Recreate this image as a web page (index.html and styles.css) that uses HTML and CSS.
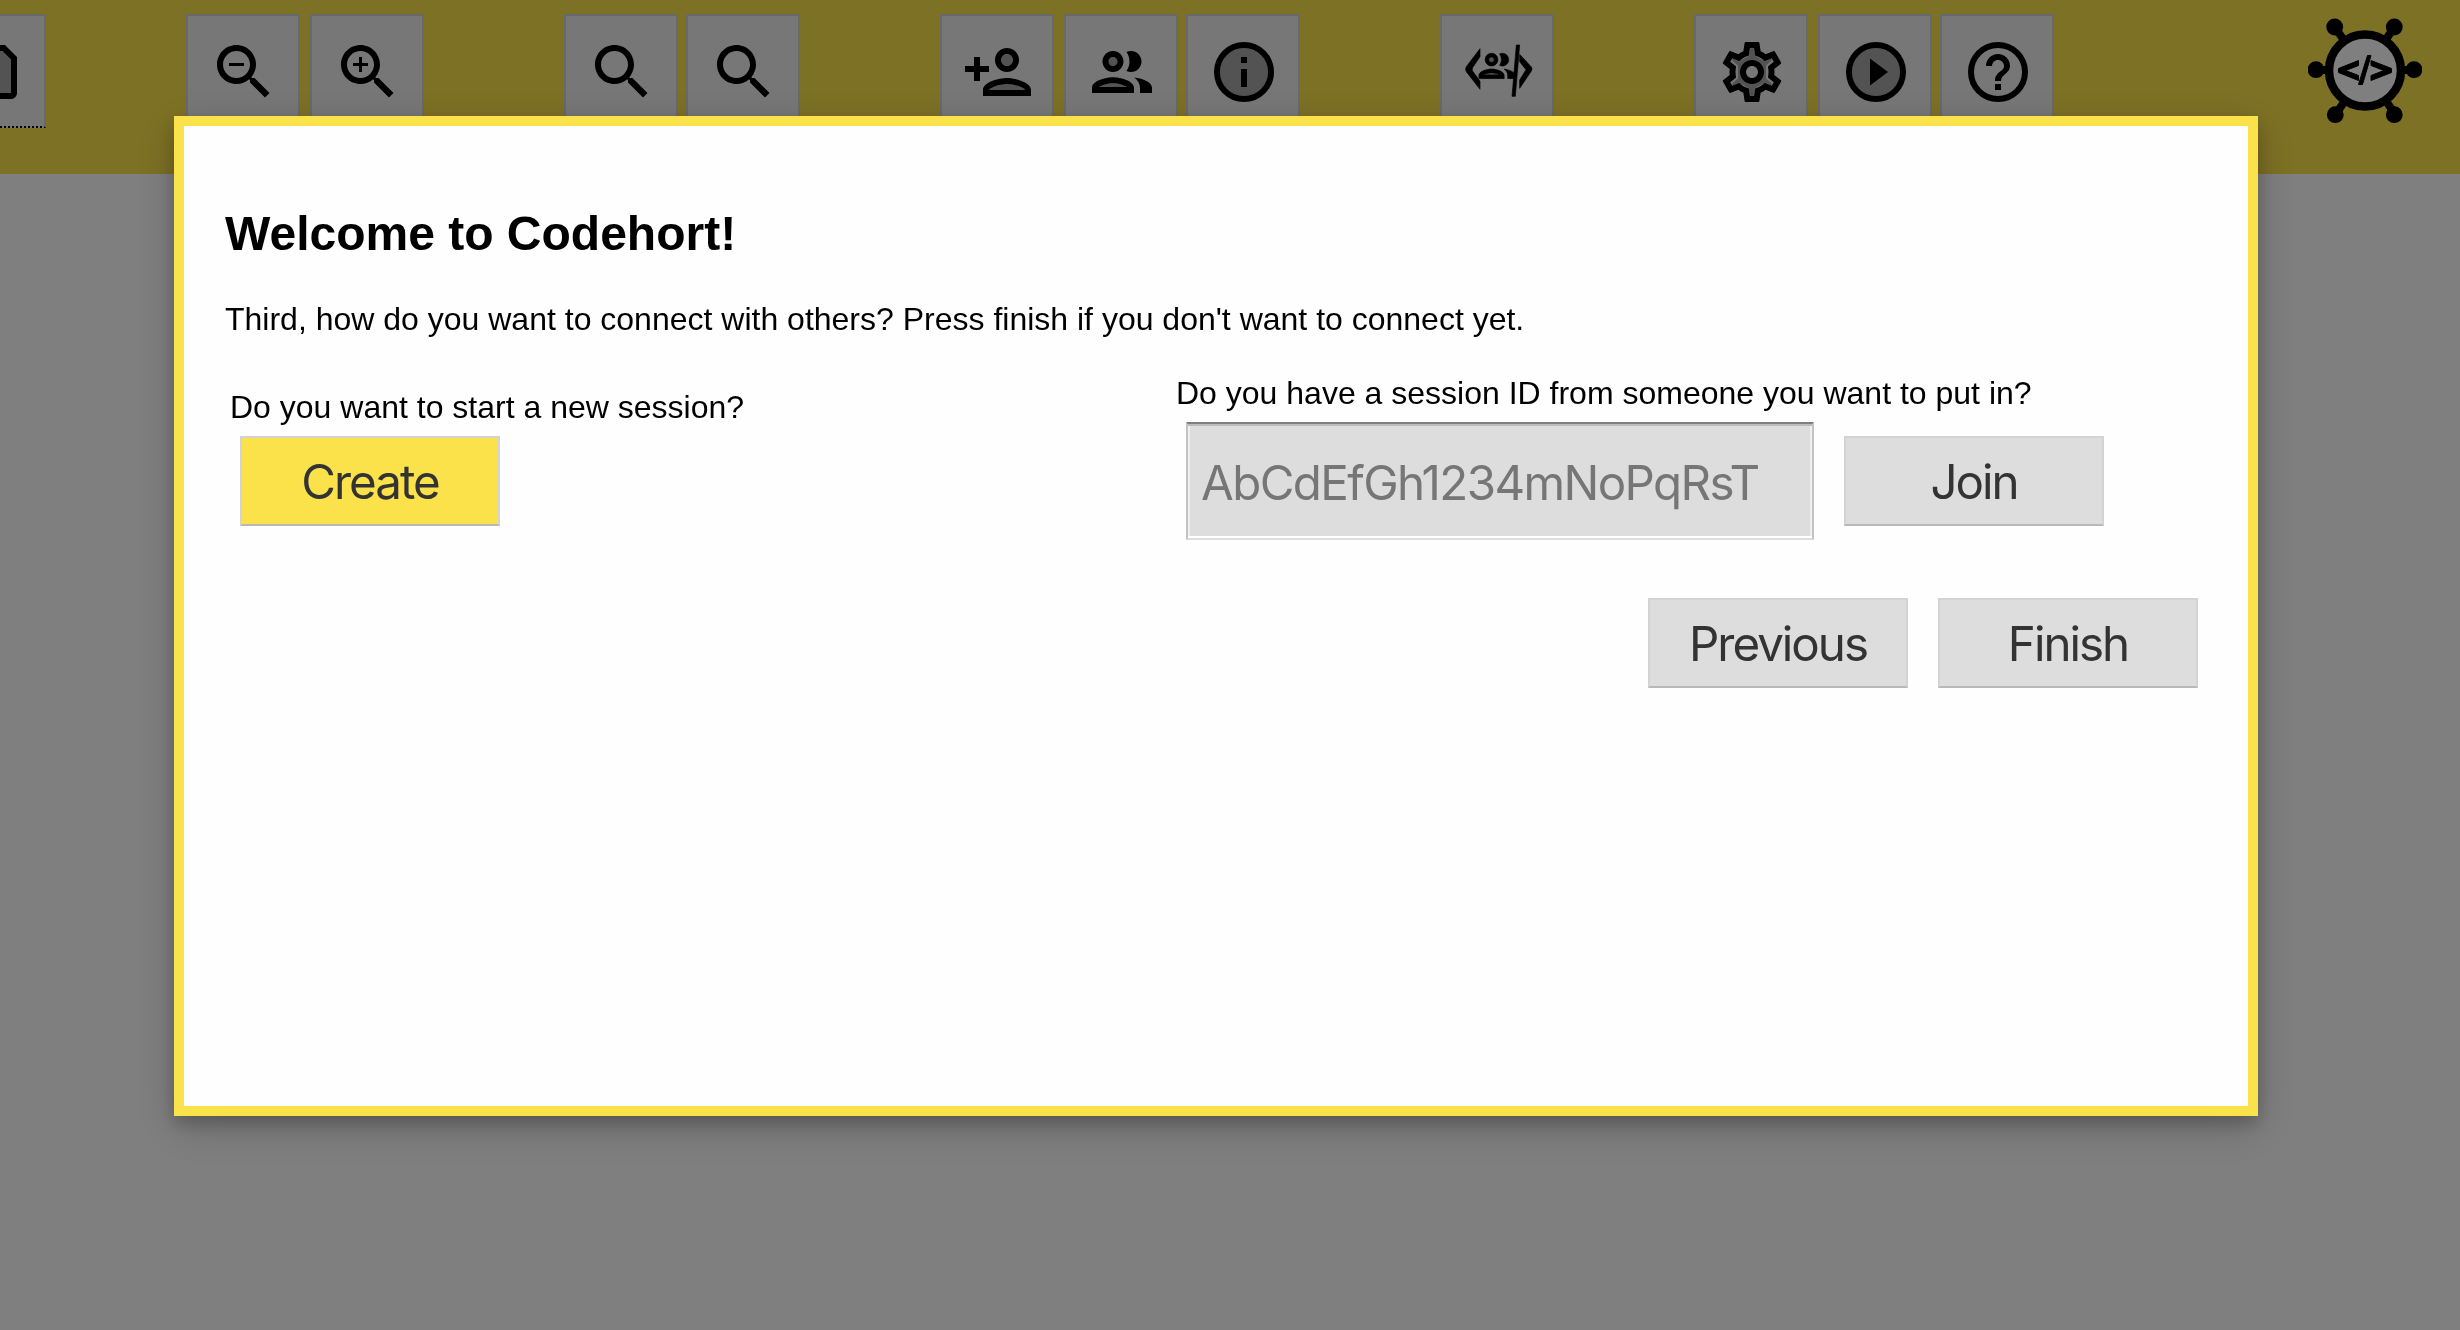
FILE: index.html
```html
<!DOCTYPE html>
<html lang="en">
<head>
<meta charset="utf-8">
<title>Codehort</title>
<link rel="stylesheet" href="styles.css">
</head>
<body>
<svg class="symbols" aria-hidden="true">
  <symbol id="search" viewBox="0 0 24 24"><path d="M15.5 14h-.79l-.28-.27C15.41 12.59 16 11.11 16 9.5 16 5.91 13.09 3 9.5 3S3 5.91 3 9.5 5.91 16 9.5 16c1.61 0 3.09-.59 4.23-1.57l.27.28v.79l5 4.99L20.49 19l-4.99-5zm-6 0C7.01 14 5 11.99 5 9.5S7.01 5 9.5 5 14 7.01 14 9.5 11.99 14 9.5 14z"/></symbol>
  <symbol id="people" viewBox="0 0 24 24">
    <path opacity=".3" d="M4.34 17h9.32c-.84-.58-2.87-1.25-4.66-1.25S5.18 16.42 4.34 17z"/><circle opacity=".3" cx="9" cy="8.5" r="1.5"/>
    <path d="M9 13.75c-2.34 0-7 1.17-7 3.5V19h14v-1.75c0-2.33-4.66-3.5-7-3.5zM4.34 17c.84-.58 2.87-1.25 4.66-1.25s3.82.67 4.66 1.25H4.34zM9 12c1.93 0 3.5-1.57 3.5-3.5S10.93 5 9 5 5.5 6.57 5.5 8.5 7.07 12 9 12zm0-5c.83 0 1.5.67 1.5 1.5S9.83 10 9 10s-1.5-.67-1.5-1.5S8.17 7 9 7zm7.04 6.81c1.16.84 1.96 1.96 1.96 3.44V19h4v-1.75c0-2.02-3.5-3.17-5.96-3.44zM15 12c1.93 0 3.5-1.57 3.5-3.5S16.93 5 15 5c-.54 0-1.04.13-1.5.35.63.89 1 1.98 1 3.15s-.37 2.26-1 3.15c.46.22.96.35 1.5.35z"/>
  </symbol>
</svg>

<header class="toolbar">
  <div class="group group-file">
    <button class="tool tool-focused" aria-label="Save"><svg class="icon" viewBox="0 0 24 24"><path opacity=".3" d="M5 5v14h14V7.83L16.17 5H5z"/><path d="M17 3H5c-1.11 0-2 .9-2 2v14c0 1.1.89 2 2 2h14c1.1 0 2-.9 2-2V7l-4-4zm2 16H5V5h11.17L19 7.83V19zM6 6h9v4H6z"/><circle cx="12" cy="15" r="3"/></svg></button>
  </div>
  <div class="group group-zoom">
    <button class="tool" aria-label="Zoom out"><svg class="icon" viewBox="0 0 24 24"><use href="#search"/><path d="M7 9h5v1H7z"/></svg></button>
    <button class="tool" aria-label="Zoom in"><svg class="icon" viewBox="0 0 24 24"><use href="#search"/><path d="M10 7H9v2H7v1h2v2h1v-2h2V9h-2z"/></svg></button>
  </div>
  <div class="group group-search">
    <button class="tool" aria-label="Search"><svg class="icon" viewBox="0 0 24 24"><use href="#search"/></svg></button>
    <button class="tool" aria-label="Search next"><svg class="icon" viewBox="0 0 24 24"><use href="#search"/></svg></button>
  </div>
  <div class="group group-people">
    <button class="tool" aria-label="Add person"><svg class="icon" viewBox="0 0 24 24"><g opacity=".3"><circle cx="15" cy="8" r="2"/><path d="M9 18h12c-.2-.71-3.3-2-6-2-2.69 0-5.78 1.28-6 2z"/></g><path d="M15 12c2.21 0 4-1.79 4-4s-1.79-4-4-4-4 1.79-4 4 1.79 4 4 4zm0-6c1.1 0 2 .9 2 2s-.9 2-2 2-2-.9-2-2 .9-2 2-2zM15 14c-2.67 0-8 1.34-8 4v2h16v-2c0-2.66-5.33-4-8-4zm-6 4c.22-.72 3.31-2 6-2 2.7 0 5.8 1.29 6 2H9zM6 15v-3h3v-2H6V7H4v3H1v2h3v3z"/></svg></button>
    <button class="tool" aria-label="People"><svg class="icon" viewBox="0 0 24 24"><use href="#people"/></svg></button>
    <button class="tool" aria-label="Info"><svg class="icon" viewBox="0 0 24 24"><circle opacity=".3" cx="12" cy="12" r="8"/><circle class="line" cx="12" cy="12" r="9"/><path d="M11 7h2v2h-2zM11 11h2v6h-2z"/></svg></button>
  </div>
  <div class="group group-code">
    <button class="tool" aria-label="Shared code"><svg class="icon" viewBox="0 0 216 216"><path class="bold" d="M54 38v24L31 96v8l23 32v24L13 107q-4-7 0-15zM173 55l35 38q4 6 0 12l-35 52v-25l19-31-19-24zM163 27h10l-13 154h-10z"/><use class="bold-people" href="#people" x="40" y="25" width="129.6" height="129.6"/></svg></button>
  </div>
  <div class="group group-app">
    <button class="tool" aria-label="Settings"><svg class="icon" viewBox="0 0 24 24"><path opacity=".3" fill-rule="evenodd" d="M11.3 4h1.4l.4 2.7 2.2 1.2 2.7-1 .7 1.2-2 1.7v4.4l2 1.7-.7 1.2-2.7-1-2.2 1.2-.4 2.7h-1.4l-.4-2.7-2.2-1.2-2.7 1-.7-1.2 2-1.7V9.8l-2-1.7.7-1.2 2.7 1 2.2-1.2zM12 9a3 3 0 1 0 0 6 3 3 0 0 0 0-6z"/><path d="M19.43 12.98c.04-.32.07-.64.07-.98 0-.34-.03-.66-.07-.98l2.11-1.65c.19-.15.24-.42.12-.64l-2-3.46c-.09-.16-.26-.25-.44-.25-.06 0-.12.01-.17.03l-2.49 1c-.52-.4-1.08-.73-1.69-.98l-.38-2.65C14.46 2.18 14.25 2 14 2h-4c-.25 0-.46.18-.49.42l-.38 2.65c-.61.25-1.17.59-1.69.98l-2.49-1c-.06-.02-.12-.03-.18-.03-.17 0-.34.09-.43.25l-2 3.46c-.13.22-.07.49.12.64l2.11 1.65c-.04.32-.07.65-.07.98 0 .33.03.66.07.98l-2.11 1.65c-.19.15-.24.42-.12.64l2 3.46c.09.16.26.25.44.25.06 0 .12-.01.17-.03l2.49-1c.52.4 1.08.73 1.69.98l.38 2.65c.03.24.24.42.49.42h4c.25 0 .46-.18.49-.42l.38-2.65c.61-.25 1.17-.59 1.69-.98l2.49 1c.06.02.12.03.18.03.17 0 .34-.09.43-.25l2-3.46c.12-.22.07-.49-.12-.64l-2.11-1.65zm-1.98-1.71c.04.31.05.52.05.73 0 .21-.02.43-.05.73l-.14 1.13.89.7 1.08.84-.7 1.21-1.27-.51-1.04-.42-.9.68c-.43.32-.84.56-1.25.73l-1.06.43-.16 1.13-.2 1.35h-1.4l-.19-1.35-.16-1.13-1.06-.43c-.43-.18-.83-.41-1.23-.71l-.91-.7-1.06.43-1.27.51-.7-1.21 1.08-.84.89-.7-.14-1.13c-.03-.31-.05-.54-.05-.74s.02-.43.05-.73l.14-1.13-.89-.7-1.08-.84.7-1.21 1.27.51 1.04.42.9-.68c.43-.32.84-.56 1.25-.73l1.06-.43.16-1.13.2-1.35h1.39l.19 1.35.16 1.13 1.06.43c.43.18.83.41 1.23.71l.91.7 1.06-.43 1.27-.51.7 1.21-1.07.85-.89.7.14 1.13zM12 8c-2.21 0-4 1.79-4 4s1.79 4 4 4 4-1.79 4-4-1.79-4-4-4zm0 6c-1.1 0-2-.9-2-2s.9-2 2-2 2 .9 2 2-.9 2-2 2z"/></svg></button>
    <button class="tool" aria-label="Run"><svg class="icon" viewBox="0 0 24 24"><circle opacity=".3" cx="12" cy="12" r="8"/><circle class="line" cx="12" cy="12" r="9"/><path d="M10 16.5l6-4.5-6-4.5z"/></svg></button>
    <button class="tool" aria-label="Help"><svg class="icon" viewBox="0 0 24 24"><circle class="line" cx="12" cy="12" r="9"/><path d="M11 16h2v2h-2zM12 6c-2.21 0-4 1.79-4 4h2c0-1.1.9-2 2-2s2 .9 2 2c0 2-3 1.75-3 5h2c0-2.25 3-2.5 3-5 0-2.21-1.79-4-4-4z"/></svg></button>
  </div>
  <svg class="logo" viewBox="0 0 114 106">
    <g class="spokes"><path d="M8 52h98M26.7 9l61 88M86.3 9l-59 88"/></g>
    <circle cx="8" cy="51.7" r="8.4"/><circle cx="106" cy="51.7" r="8.4"/><circle cx="26.7" cy="9" r="8.4"/><circle cx="86.3" cy="9" r="8.4"/><circle cx="27.3" cy="96.7" r="8.4"/><circle cx="86.3" cy="96.7" r="8.4"/>
    <circle class="wheel" cx="57" cy="52.5" r="36"/>
    <path class="code" d="M50.5 42.500v5L37.500 52.500l13 5v5L30.500 54.500v-4zM63 42.500v5l13 5-13 5v5l20.500-8v-4zM59.500 37.500h3.500L54.500 66.500h-4z"/>
  </svg>
</header>

<div class="overlay">
  <section class="dialog" role="dialog">
    <h1 class="title">Welcome to Codehort!</h1>
    <p class="intro">Third, how do you want to connect with others? Press finish if you don't want to connect yet.</p>
    <div class="options">
      <div class="option option-new">
        <label class="label">Do you want to start a new session?</label>
        <div class="row"><button class="button button-primary">Create</button></div>
      </div>
      <div class="option option-join">
        <label class="label" for="session">Do you have a session ID from someone you want to put in?</label>
        <div class="row"><input class="field" id="session" placeholder="AbCdEfGh1234mNoPqRsT"><button class="button">Join</button></div>
      </div>
    </div>
    <div class="actions"><button class="button">Previous</button><button class="button">Finish</button></div>
  </section>
</div>
</body>
</html>
```
FILE: styles.css
```css
* { box-sizing: border-box; }
body { margin: 0; height: 1330px; overflow: hidden; background: #fff; font-family: "Liberation Sans", Arial, sans-serif; color: #000; }
.symbols { display: none; }
.toolbar { display: flex; align-items: flex-start; height: 174px; padding-top: 14px; background: #fbe24b; }
.group { display: flex; flex: none; gap: 8px; }
.group-file { margin-left: -68px; }
.group-zoom { margin-left: 140px; gap: 10px; }
.group-search { margin-left: 140px; }
.group-people { margin-left: 140px; }
.group-code { margin-left: 140px; }
.group-app { margin-left: 140px; }
.group-people .tool:first-child, .group-app .tool:first-child { margin-right: 2px; }
.tool { width: 114px; height: 114px; padding: 2px 0 0 2px; border: 2px solid #d3d3d3; background: #eee; display: flex; align-items: center; justify-content: center; }
.tool-focused { border-bottom: 2px dotted #000; }
.icon { width: 72px; height: 72px; }
.line { fill: none; stroke: #000; stroke-width: 2; }
.bold { stroke: #000; stroke-width: 2; }
.bold-people { stroke: #000; stroke-width: .4; }
.logo { width: 114px; height: 106px; margin: 4px 0 0 254px; flex: none; }
.spokes { stroke: #000; stroke-width: 8; }
.wheel { fill: #fff; stroke: #000; stroke-width: 8.5; }
.code { stroke: #000; stroke-width: 1; stroke-linejoin: round; }

.overlay { position: fixed; inset: 0; padding-top: 116px; background: rgba(0, 0, 0, .5); }
.dialog { width: 2084px; height: 1000px; margin-left: 174px; padding: 81px 40px 0; border: 10px solid #fbe24b; background: #fefefe; box-shadow: 0 8px 16px rgba(0, 0, 0, .2), 0 12px 40px rgba(0, 0, 0, .19); }
.title { margin: 0 0 0 1px; font-size: 48px; line-height: 54px; }
.intro { margin: 40px 0 0 1px; font-size: 32px; line-height: 36px; }
.options { display: flex; margin-top: 38px; }
.option { display: flex; flex-direction: column; }
.option-new { width: 946px; padding: 14px 0 0 6px; }
.option-join { padding-left: 6px; }
.label { font-size: 32px; line-height: 36px; }
.row { display: flex; align-items: center; gap: 30px; margin-top: 11px; padding-left: 10px; }
.button { width: 260px; height: 90px; padding: 2px 0 0; border: 2px solid #d3d3d3; border-bottom-color: #b8b8b8; background: #ddd; color: #333; font: 47.5px/1 Inter, sans-serif; letter-spacing: -2px; }
.button-primary { background: #fbe24b; }
.field { width: 628px; height: 118px; padding: 2px 13px 0; border: 2px solid #c3c3c3; border-top-color: #7f7f7f; border-bottom-color: #ddd; background: #ddd; box-shadow: inset 0 2px #bbb, inset 0 -2px #fff, inset 2px 0 #eee, inset -2px 0 #eee; font: 47.5px/1 Inter, sans-serif; letter-spacing: -1.6px; }
.field::placeholder { color: #767676; opacity: 1; }
.actions { display: flex; justify-content: flex-end; gap: 30px; margin: 58px 10px 0 0; }
```
